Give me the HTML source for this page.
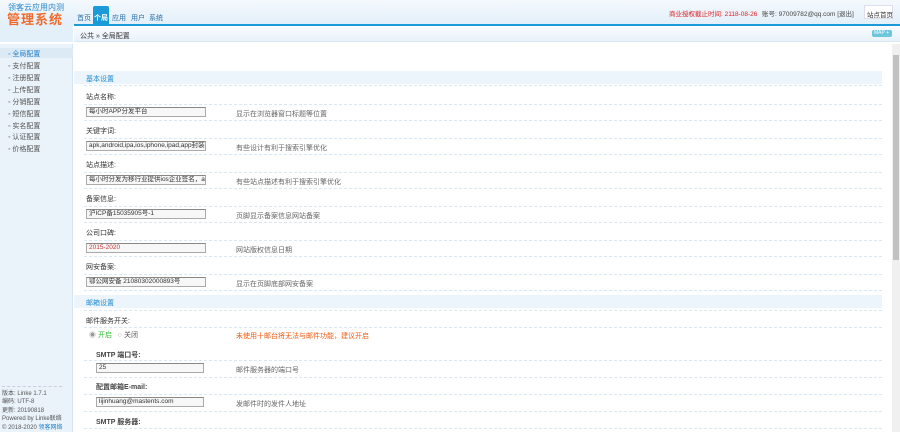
<!DOCTYPE html>
<html><head><meta charset="utf-8"><style>
*{margin:0;padding:0;box-sizing:border-box}
body{width:900px;height:432px;overflow:hidden;background:#fff;font-family:"Liberation Sans","Noto Sans CJK SC",sans-serif;font-size:7px;color:#333;position:relative}
.a{position:absolute;white-space:nowrap}
.hdr{left:0;top:0;width:900px;height:25px;background:linear-gradient(#f4f9fd,#e3eff9)}
.bl{left:74px;top:24px;width:826px;height:2px;background:#1a9ad6}
.side{left:0;top:44px;width:73px;height:388px;background:#eaf3fa;border-right:1px solid #d5e5f2}
.bc{left:74px;top:27px;width:826px;height:15px;background:linear-gradient(#f8fbfe,#e9f2fa);border-bottom:1px solid #dbe8f3}
.sec{left:74px;width:808px;height:13px;background:#edf5fc;color:#1f8ad0;padding:3px 0 0 12px}
.dash{left:84px;width:798px;height:0;border-top:1px dashed #d6e8f5}
.inp{height:10px;border:1px solid #aaa;border-top-color:#888;background:#f7f7f7;font-size:6.5px;line-height:8px;padding:0 2px;overflow:hidden;color:#333}
.lab{left:86px}
.desc{left:236px;color:#666}
.nav{left:8px;color:#555}
</style></head><body>
<div class="a hdr"></div>
<div class="a" style="left:0;top:24px;width:73px;height:18px;background:#e3eff9"></div>
<div class="a" style="left:8px;top:3px;color:#2a87c8;font-size:8px;line-height:10px">领客云应用内测</div>
<div class="a" style="left:7px;top:12px;color:#f06a2a;font-size:13px;line-height:15px;font-weight:bold;letter-spacing:1px">管理系统</div>
<div class="a" style="left:77px;top:13px;color:#2a6fa8">首页</div>
<div class="a" style="left:93px;top:6px;width:16px;height:19px;background:#1a9ad6;border-radius:2px 2px 0 0"></div>
<div class="a" style="left:94px;top:13px;color:#fff;font-weight:bold">个局</div>
<div class="a" style="left:112px;top:13px;color:#2a6fa8">应用</div>
<div class="a" style="left:131px;top:13px;color:#2a6fa8">用户</div>
<div class="a" style="left:149px;top:13px;color:#2a6fa8">系统</div>
<div class="a" style="left:669px;top:8px;color:#e02020;font-size:6.5px">商业授权截止时间: 2118-08-26</div>
<div class="a" style="left:762px;top:8px;color:#444;font-size:6.5px">账号: 97009782@qq.com [退出]</div>
<div class="a" style="left:864px;top:5px;width:29px;height:14px;background:#fff;border:1px solid #dde;font-size:6.5px;padding:3px 2px">站点首页</div>
<div class="a bl"></div>
<div class="a bc"></div>
<div class="a" style="left:80px;top:31px;color:#333">公共 » 全局配置</div>
<div class="a" style="left:872px;top:30px;width:20px;height:7px;background:#6cc7dc;border-radius:2px;color:#fff;font-size:5px;padding:0 2px;line-height:7px">MAP +</div>
<div class="a side"></div>
<div class="a" style="left:0;top:48px;width:73px;height:10px;background:#dceaf6"></div>
<div class="a nav" style="top:49px;color:#1f7fc6">◦ 全局配置</div>
<div class="a nav" style="top:61px">◦ 支付配置</div>
<div class="a nav" style="top:73px">◦ 注册配置</div>
<div class="a nav" style="top:85px">◦ 上传配置</div>
<div class="a nav" style="top:97px">◦ 分销配置</div>
<div class="a nav" style="top:109px">◦ 短信配置</div>
<div class="a nav" style="top:121px">◦ 实名配置</div>
<div class="a nav" style="top:132px">◦ 认证配置</div>
<div class="a nav" style="top:144px">◦ 价格配置</div>
<div class="a" style="left:2px;top:386px;width:60px;border-top:1px dashed #ccd"></div>
<div class="a" style="left:2px;top:390px;color:#555;font-size:6px;line-height:8.4px">版本: Linke 1.7.1<br>编码: UTF-8<br>更新: 20190818<br>Powered by Linke联络<br>© 2018-2020 <span style="color:#1f7fc6">领客网络</span></div>
<div class="a" style="left:892px;top:44px;width:8px;height:388px;background:#f0f0f0"></div>
<div class="a" style="left:893px;top:55px;width:6px;height:205px;background:#c1c1c1"></div>

<div class="a sec" style="top:71px">基本设置</div>
<div class="a dash" style="top:85px"></div>
<div class="a lab" style="top:92px">站点名称:</div>
<div class="a dash" style="top:104px"></div>
<div class="a inp" style="left:86px;top:107px;width:120px">每小时APP分发平台</div>
<div class="a desc" style="top:109px">显示在浏览器窗口标题等位置</div>
<div class="a dash" style="top:120px"></div>
<div class="a lab" style="top:126px">关键字词:</div>
<div class="a dash" style="top:138px"></div>
<div class="a inp" style="left:86px;top:141px;width:120px">apk,android,ipa,ios,iphone,ipad,app封装,测</div>
<div class="a desc" style="top:143px">有些设计有利于搜索引擎优化</div>
<div class="a dash" style="top:154px"></div>
<div class="a lab" style="top:160px">站点描述:</div>
<div class="a dash" style="top:172px"></div>
<div class="a inp" style="left:86px;top:175px;width:120px">每小时分发为移行业提供ios企业签名，app分发</div>
<div class="a desc" style="top:177px">有些站点描述有利于搜索引擎优化</div>
<div class="a dash" style="top:188px"></div>
<div class="a lab" style="top:194px">备案信息:</div>
<div class="a dash" style="top:206px"></div>
<div class="a inp" style="left:86px;top:209px;width:120px">沪ICP备15035905号-1</div>
<div class="a desc" style="top:211px">页脚显示备案信息网站备案</div>
<div class="a dash" style="top:222px"></div>
<div class="a lab" style="top:228px">公司口碑:</div>
<div class="a dash" style="top:240px"></div>
<div class="a inp" style="left:86px;top:243px;width:120px;color:#c33">2015-2020</div>
<div class="a desc" style="top:245px">网站版权信息日期</div>
<div class="a dash" style="top:256px"></div>
<div class="a lab" style="top:262px">网安备案:</div>
<div class="a dash" style="top:274px"></div>
<div class="a inp" style="left:86px;top:277px;width:120px">鄂公网安备 21080302000893号</div>
<div class="a desc" style="top:279px">显示在页脚底部网安备案</div>
<div class="a dash" style="top:290px"></div>
<div class="a sec" style="top:295px">邮箱设置</div>
<div class="a dash" style="top:310px"></div>
<div class="a lab" style="top:316px">邮件服务开关:</div>
<div class="a dash" style="top:327px"></div>
<div class="a" style="left:89px;top:330px;color:#999">◉ <span style="color:#3b3">开启</span> &nbsp;&nbsp;○ <span style="color:#555">关闭</span></div>
<div class="a" style="left:236px;top:331px;color:#f05a10">未使用十邮台将无法与邮件功能，建议开启</div>
<div class="a lab" style="left:96px;top:350px;font-weight:bold;color:#444">SMTP 端口号:</div>
<div class="a dash" style="top:360px"></div>
<div class="a inp" style="left:96px;top:363px;width:108px">25</div>
<div class="a desc" style="top:365px">邮件服务器的端口号</div>
<div class="a dash" style="top:377px"></div>
<div class="a lab" style="left:96px;top:382px;font-weight:bold;color:#444">配置邮箱E-mail:</div>
<div class="a dash" style="top:394px"></div>
<div class="a inp" style="left:96px;top:397px;width:108px">lijinhuang@mastents.com</div>
<div class="a desc" style="top:399px">发邮件时的发件人地址</div>
<div class="a dash" style="top:411px"></div>
<div class="a lab" style="left:96px;top:417px;font-weight:bold;color:#444">SMTP 服务器:</div>
<div class="a dash" style="top:428px"></div>
</body></html>
